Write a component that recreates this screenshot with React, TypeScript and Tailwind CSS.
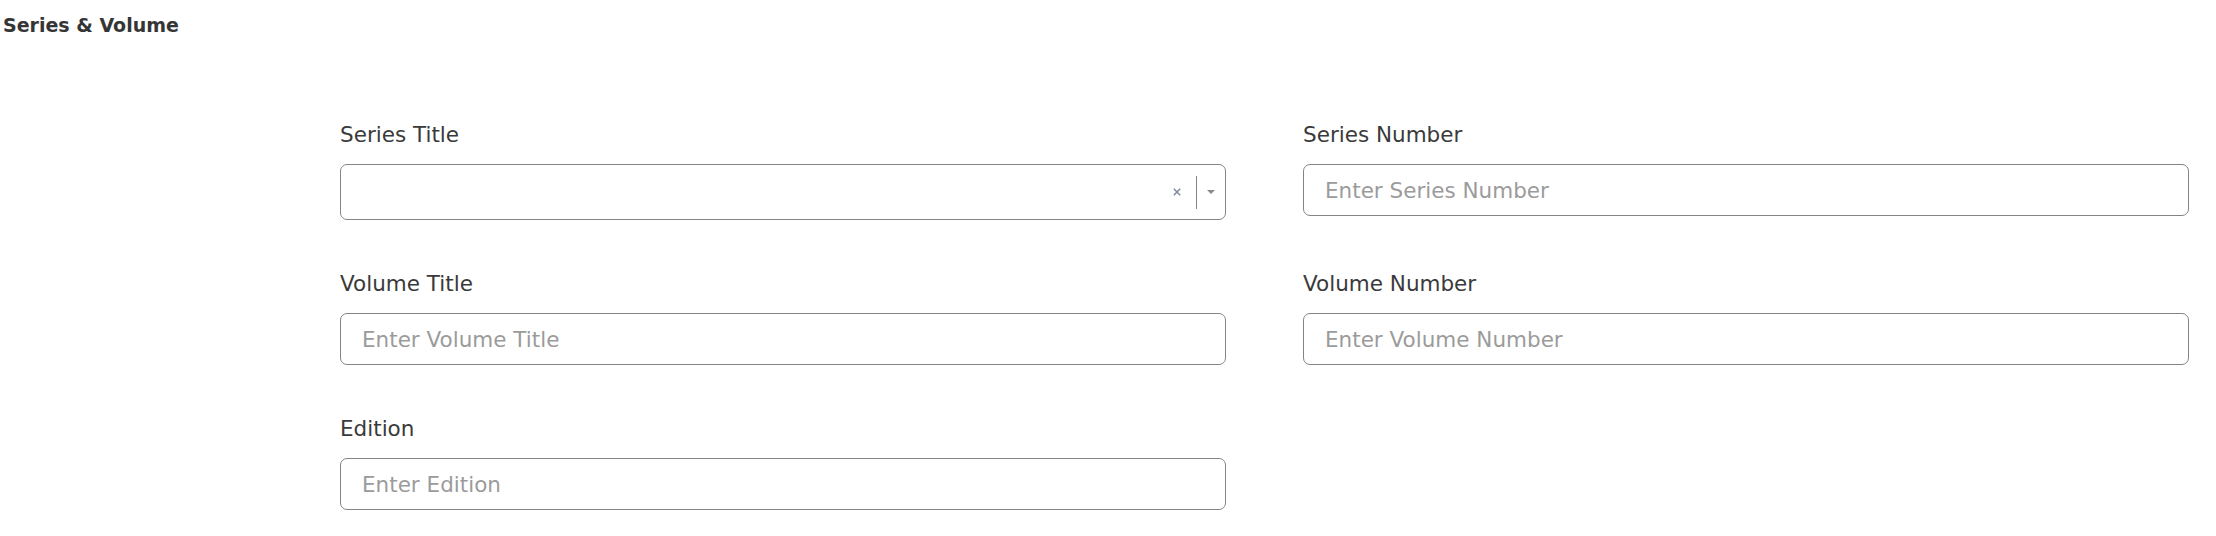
const font = { fontFamily: '"DejaVu Sans", "Open Sans", sans-serif' };

function Field({ label, placeholder }: { label: string; placeholder: string }) {
  return (
    <div className="flex flex-col">
      <label className="text-[21.5px] leading-[24px] text-[#3a3a3a]">{label}</label>
      <input
        placeholder={placeholder}
        className="mt-[17px] h-[52px] w-full rounded-[7px] border-[1.5px] border-[#848484] bg-white px-[21px] text-[21.5px] text-[#333] placeholder:text-[#9b9b9b] focus:outline-none"
      />
    </div>
  );
}

function SeriesSelect() {
  return (
    <div className="flex flex-col">
      <label className="text-[21.5px] leading-[24px] text-[#3a3a3a]">Series Title</label>
      <div className="mt-[17px] flex h-[56px] w-full items-center rounded-[7px] border-[1.5px] border-[#848484] bg-white">
        <div className="flex-1" />
        <svg width="8" height="8" viewBox="0 0 8 8" className="mr-[15px]">
          <path d="M0.8 0.8 L7.2 7.2 M7.2 0.8 L0.8 7.2" stroke="#7f8a96" strokeWidth="1.5" />
        </svg>
        <span className="h-[33px] w-[1.5px] bg-[#848484]" />
        <svg width="8" height="4" viewBox="0 0 8 4" className="mx-[10px]">
          <path d="M0 0 L8 0 L4 4 Z" fill="#8a8a8a" />
        </svg>
      </div>
    </div>
  );
}

export default function App() {
  return (
    <div className="h-[536px] w-[2216px] bg-white" style={font}>
      <h2 className="pl-[3px] pt-[13px] text-[19px] font-semibold leading-[24px] text-[#353535]">
        Series &amp; Volume
      </h2>
      <div className="ml-[340px] mr-[27px] mt-[86px] grid grid-cols-2 gap-x-[77px] gap-y-[52px]">
        <SeriesSelect />
        <Field label="Series Number" placeholder="Enter Series Number" />
        <Field label="Volume Title" placeholder="Enter Volume Title" />
        <Field label="Volume Number" placeholder="Enter Volume Number" />
        <Field label="Edition" placeholder="Enter Edition" />
      </div>
    </div>
  );
}
